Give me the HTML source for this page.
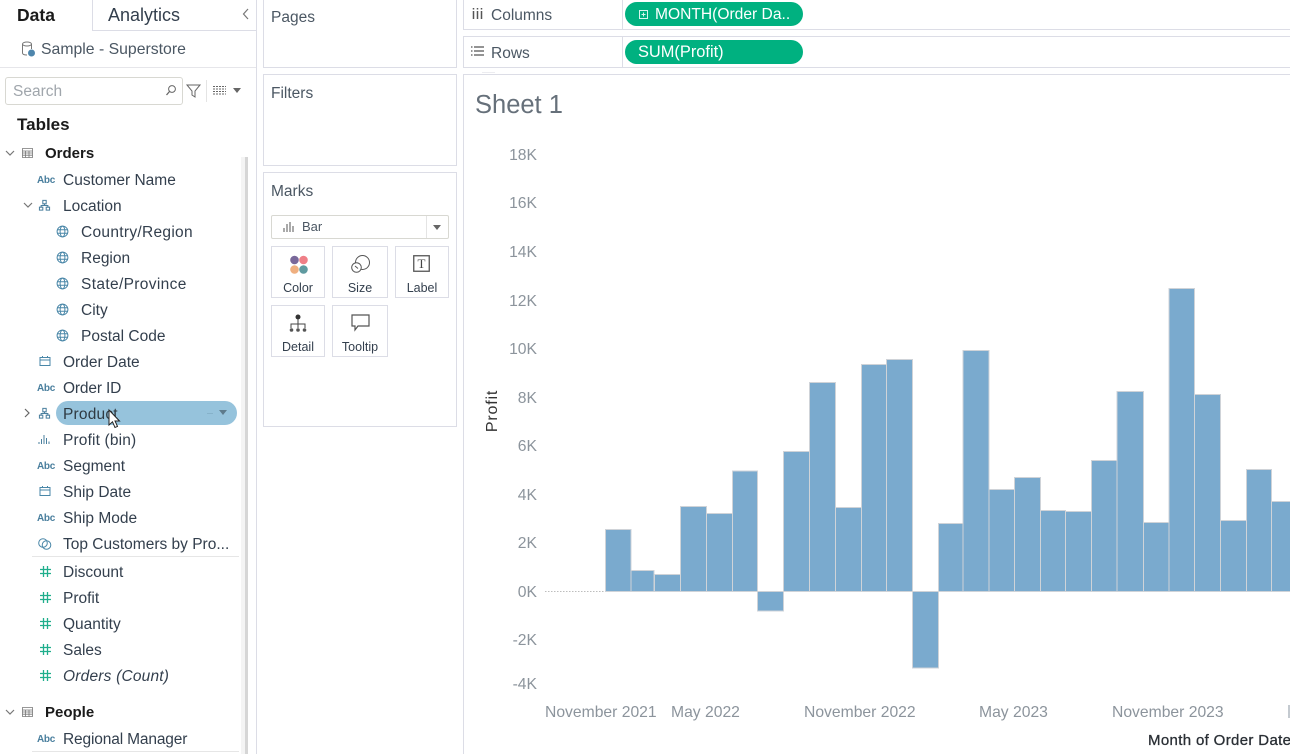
<!DOCTYPE html>
<html><head><meta charset="utf-8">
<style>
html,body{margin:0;padding:0;background:#fff;overflow:hidden;width:1290px;height:754px;}
#w{position:relative;width:1290px;height:754px;overflow:hidden;font-family:"Liberation Sans",sans-serif;color:#2b3a4a;}
.t{position:absolute;white-space:nowrap;font-size:15.5px;line-height:18px;margin-top:2px;color:#333f4d;}
.b{font-weight:bold;color:#1a1a1a;font-size:15px;}
.box{position:absolute;border:1px solid #dcdde6;box-sizing:border-box;background:#fff;}
.ax{position:absolute;width:60px;text-align:right;left:477px;font-size:15.7px;line-height:16px;margin-top:1px;color:#8c949c;white-space:nowrap;}
.xl{position:absolute;top:705px;font-size:15.7px;line-height:16px;color:#8c949c;white-space:nowrap;}
.pill{position:absolute;left:625px;width:178px;height:24px;border-radius:12px;background:#00b180;color:#fff;line-height:23px;white-space:nowrap;}
.pill span{top:1px;}
.card{position:absolute;border:1px solid #dcdde6;box-sizing:border-box;width:54px;height:52px;background:#fff;text-align:center;font-size:12.5px;color:#333f4d;}
.card span{position:absolute;left:0;right:0;top:34px;line-height:14px;}
.abc{position:absolute;left:37px;font-size:10px;line-height:12px;margin-top:2px;font-weight:bold;color:#4a7f9e;letter-spacing:-.3px;}
svg{position:absolute;overflow:visible;}
</style></head><body><div id="w">

<!-- Data pane -->
<div style="position:absolute;left:92px;top:0;width:1px;height:31px;background:#dcdde6"></div>
<div style="position:absolute;left:92px;top:30px;width:165px;height:1px;background:#dcdde6"></div>
<div style="position:absolute;left:0;top:67px;width:257px;height:1px;background:#e6e6ea"></div>
<div style="position:absolute;left:256px;top:0;width:1px;height:754px;background:#dcdde6"></div>
<div class="t b" style="left:17px;top:4px;font-size:17.5px">Data</div>
<div class="t" style="left:108px;top:4px;font-size:18px">Analytics</div>
<svg style="left:240px;top:7px" width="12" height="14"><path d="M8 2L3.500 7L8 12" fill="none" stroke="#777" stroke-width="1.200"/></svg>
<svg style="left:21px;top:41px" width="16" height="16"><ellipse cx="6" cy="3" rx="4.500" ry="2" fill="none" stroke="#777"/><path d="M1.500 3V12Q1.500 14 6 14M10.500 3V8" fill="none" stroke="#777"/><circle cx="10.500" cy="12" r="3.500" fill="#4f86ac"/></svg>
<div class="t" style="left:41px;top:39px;color:#4b5763;font-size:15.8px">Sample - Superstore</div>

<div style="position:absolute;left:5px;top:77px;width:178px;height:28px;border:1px solid #d8d8d2;border-radius:3px;box-sizing:border-box"></div>
<div class="t" style="left:13px;top:81px;color:#a0a6ac">Search</div>
<svg style="left:165px;top:84px" width="12" height="13"><circle cx="7" cy="5" r="3.400" fill="none" stroke="#666"/><path d="M4.500 7.500L1.500 11" stroke="#666" stroke-width="1.300"/></svg>
<svg style="left:186px;top:84px" width="15" height="14"><path d="M1 1H14L9 7V13L6 11V7Z" fill="none" stroke="#666"/></svg>
<div style="position:absolute;left:206px;top:80px;width:1px;height:22px;background:#e4e4e4"></div>
<svg style="left:213px;top:85px" width="13" height="11"><path d="M0 1.500H13M0 4H13M0 6.500H13M0 9H13" stroke="#666" stroke-dasharray="2 1"/></svg>
<svg style="left:233px;top:88px" width="9" height="6"><path d="M0 0H8L4 5Z" fill="#666"/></svg>
<div class="t b" style="left:17px;top:114px;font-size:17px">Tables</div>

<!-- Orders -->
<svg style="left:5px;top:150px" width="10" height="7"><path d="M1 1L5 5L9 1" fill="none" stroke="#777" stroke-width="1.200"/></svg>
<svg style="left:22px;top:148px" width="11" height="10"><path d="M.5.500H10.500V9.500H.5ZM.5 3H10.500M.5 5H10.500M.5 7.200H10.500M3.500 3V9.500M7 3V9.500" fill="none" stroke="#777" stroke-width=".8"/></svg>
<div class="t b" style="left:45px;top:143px">Orders</div>
<div style="position:absolute;left:245px;top:157px;width:3px;height:597px;background:#d6d6d6"></div>
<div style="position:absolute;left:241px;top:157px;width:4px;height:597px;background:#f4f4f4"></div>

<div class="abc" style="top:173px">Abc</div>
<div class="t" style="left:63px;top:170px">Customer Name</div>

<svg style="left:23px;top:202px" width="10" height="7"><path d="M1 1L5 5L9 1" fill="none" stroke="#777" stroke-width="1.200"/></svg>
<svg style="left:39px;top:200px" width="11" height="11" viewBox="0 0 13 13"><path d="M4.500.5H8.500V4.500H4.500ZM.5 8.500H4.500V12H.5ZM8.500 8.500H12.500V12H8.500ZM6.500 4.500V6.500M2.500 8.500V6.500H10.500V8.500" fill="none" stroke="#4a7f9e" stroke-width="1.200"/></svg>
<div class="t" style="left:63px;top:196px">Location</div>

<svg style="left:56px;top:225px" width="13" height="13"><g fill="none" stroke="#4a87a8" stroke-width="1"><circle cx="6.500" cy="6.500" r="5.400"/><ellipse cx="6.500" cy="6.500" rx="2.400" ry="5.400"/><path d="M1.500 4.800H11.500M1.500 8.200H11.500"/></g></svg>
<div class="t" style="left:81px;top:222px;letter-spacing:.3px">Country/Region</div>
<svg style="left:56px;top:251px" width="13" height="13"><g fill="none" stroke="#4a87a8" stroke-width="1"><circle cx="6.500" cy="6.500" r="5.400"/><ellipse cx="6.500" cy="6.500" rx="2.400" ry="5.400"/><path d="M1.500 4.800H11.500M1.500 8.200H11.500"/></g></svg>
<div class="t" style="left:81px;top:248px">Region</div>
<svg style="left:56px;top:277px" width="13" height="13"><g fill="none" stroke="#4a87a8" stroke-width="1"><circle cx="6.500" cy="6.500" r="5.400"/><ellipse cx="6.500" cy="6.500" rx="2.400" ry="5.400"/><path d="M1.500 4.800H11.500M1.500 8.200H11.500"/></g></svg>
<div class="t" style="left:81px;top:274px;letter-spacing:.35px">State/Province</div>
<svg style="left:56px;top:303px" width="13" height="13"><g fill="none" stroke="#4a87a8" stroke-width="1"><circle cx="6.500" cy="6.500" r="5.400"/><ellipse cx="6.500" cy="6.500" rx="2.400" ry="5.400"/><path d="M1.500 4.800H11.500M1.500 8.200H11.500"/></g></svg>
<div class="t" style="left:81px;top:300px">City</div>
<svg style="left:56px;top:329px" width="13" height="13"><g fill="none" stroke="#4a87a8" stroke-width="1"><circle cx="6.500" cy="6.500" r="5.400"/><ellipse cx="6.500" cy="6.500" rx="2.400" ry="5.400"/><path d="M1.500 4.800H11.500M1.500 8.200H11.500"/></g></svg>
<div class="t" style="left:81px;top:326px">Postal Code</div>

<svg style="left:39px;top:355px" width="12" height="12"><path d="M1 2.500H11V10.500H1ZM1 5H11M3.500 1V2.500M8.500 1V2.500" fill="none" stroke="#4a87a8"/></svg>
<div class="t" style="left:63px;top:352px">Order Date</div>
<div class="abc" style="top:381px">Abc</div>
<div class="t" style="left:63px;top:378px;letter-spacing:-.15px">Order ID</div>

<div style="position:absolute;left:56px;top:401px;width:181px;height:24px;border-radius:12px;background:#96c3dc"></div>
<svg style="left:24px;top:408px" width="7" height="10"><path d="M1 1L5 5L1 9" fill="none" stroke="#666" stroke-width="1.200"/></svg>
<svg style="left:39px;top:408px" width="11" height="11" viewBox="0 0 13 13"><path d="M4.500.5H8.500V4.500H4.500ZM.5 8.500H4.500V12H.5ZM8.500 8.500H12.500V12H8.500ZM6.500 4.500V6.500M2.500 8.500V6.500H10.500V8.500" fill="none" stroke="#4a7f9e" stroke-width="1.200"/></svg>
<div class="t" style="left:63px;top:404px;color:#2f3a42;letter-spacing:.2px">Product</div>
<div style="position:absolute;left:207px;top:413px;width:6px;height:1px;background:#86b2ca"></div>
<svg style="left:219px;top:410px" width="9" height="6"><path d="M0 0H8L4 5Z" fill="#5e7b8c"/></svg>
<svg style="left:108px;top:409px" width="13" height="21"><path d="M1 1V16L4.500 12.800L7 18.500L9.500 17.400L7 12H11.500Z" fill="#fff" stroke="#222" stroke-width="1"/></svg>

<svg style="left:38px;top:434px" width="13" height="11"><path d="M1 10V8M3.500 10V5M6 10V1M8.500 10V4M11 10V7.500" stroke="#4a7f9e" stroke-width="1" fill="none"/></svg>
<div class="t" style="left:63px;top:430px;letter-spacing:.15px">Profit (bin)</div>
<div class="abc" style="top:459px">Abc</div>
<div class="t" style="left:63px;top:456px">Segment</div>
<svg style="left:39px;top:485px" width="12" height="12"><path d="M1 2.500H11V10.500H1ZM1 5H11M3.500 1V2.500M8.500 1V2.500" fill="none" stroke="#4a87a8"/></svg>
<div class="t" style="left:63px;top:482px">Ship Date</div>
<div class="abc" style="top:511px">Abc</div>
<div class="t" style="left:63px;top:508px">Ship Mode</div>
<svg style="left:38px;top:537px" width="14" height="14"><circle cx="5" cy="6" r="4.300" fill="none" stroke="#4a87a8"/><circle cx="8.500" cy="8" r="4.300" fill="none" stroke="#4a87a8"/></svg>
<div class="t" style="left:63px;top:534px">Top Customers by Pro...</div>
<div style="position:absolute;left:32px;top:556px;width:207px;height:1px;background:#e6e6e6"></div>

<svg style="left:40px;top:566px" width="11" height="11"><path d="M3.500 0V11M7.500 0V11M0 3.500H11M0 7.500H11" stroke="#1fae8c" stroke-width="1.300" fill="none"/></svg>
<div class="t" style="left:63px;top:562px">Discount</div>
<svg style="left:40px;top:592px" width="11" height="11"><path d="M3.500 0V11M7.500 0V11M0 3.500H11M0 7.500H11" stroke="#1fae8c" stroke-width="1.300" fill="none"/></svg>
<div class="t" style="left:63px;top:588px">Profit</div>
<svg style="left:40px;top:618px" width="11" height="11"><path d="M3.500 0V11M7.500 0V11M0 3.500H11M0 7.500H11" stroke="#1fae8c" stroke-width="1.300" fill="none"/></svg>
<div class="t" style="left:63px;top:614px">Quantity</div>
<svg style="left:40px;top:644px" width="11" height="11"><path d="M3.500 0V11M7.500 0V11M0 3.500H11M0 7.500H11" stroke="#1fae8c" stroke-width="1.300" fill="none"/></svg>
<div class="t" style="left:63px;top:640px">Sales</div>
<svg style="left:40px;top:670px" width="11" height="11"><path d="M3.500 0V11M7.500 0V11M0 3.500H11M0 7.500H11" stroke="#1fae8c" stroke-width="1.300" fill="none"/></svg>
<div class="t" style="left:63px;top:666px;font-style:italic;letter-spacing:.2px">Orders (Count)</div>

<svg style="left:5px;top:709px" width="10" height="7"><path d="M1 1L5 5L9 1" fill="none" stroke="#777" stroke-width="1.200"/></svg>
<svg style="left:22px;top:707px" width="11" height="10"><path d="M.5.500H10.500V9.500H.5ZM.5 3H10.500M.5 5H10.500M.5 7.200H10.500M3.500 3V9.500M7 3V9.500" fill="none" stroke="#777" stroke-width=".8"/></svg>
<div class="t b" style="left:45px;top:702px">People</div>
<div class="abc" style="top:732px">Abc</div>
<div class="t" style="left:63px;top:729px;letter-spacing:-.15px">Regional Manager</div>
<div style="position:absolute;left:32px;top:751px;width:207px;height:1px;background:#e6e6e6"></div>

<!-- Middle cards -->
<div class="box" style="left:263px;top:-1px;width:194px;height:69px"></div>
<div class="t" style="left:271px;top:7px;color:#4b5763">Pages</div>
<div class="box" style="left:263px;top:74px;width:194px;height:92px"></div>
<div class="t" style="left:271px;top:83px;color:#4b5763">Filters</div>
<div class="box" style="left:263px;top:172px;width:194px;height:255px"></div>
<div class="t" style="left:271px;top:181px;color:#4b5763">Marks</div>

<div style="position:absolute;left:271px;top:215px;width:178px;height:24px;border:1px solid #d8d8d2;border-radius:2px;box-sizing:border-box"></div>
<div style="position:absolute;left:426px;top:216px;width:1px;height:22px;background:#e4e4e4"></div>
<svg style="left:283px;top:221px" width="12" height="12"><path d="M1 11V7M4 11V3M7 11V1M10 11V5" stroke="#555" fill="none"/></svg>
<div class="t" style="left:302px;top:217px;font-size:13px;line-height:16px;color:#4b5763">Bar</div>
<svg style="left:433px;top:225px" width="9" height="6"><path d="M0 0H8L4 5Z" fill="#666"/></svg>

<div class="card" style="left:271px;top:246px"><svg style="left:17px;top:8px" width="20" height="20"><circle cx="5.500" cy="5" r="4.300" fill="#79689a"/><circle cx="14.500" cy="5" r="4.300" fill="#ef7f87"/><circle cx="5.500" cy="14.500" r="4.300" fill="#efaf80"/><circle cx="14.500" cy="14.500" r="4.300" fill="#5f9aa0"/></svg><span>Color</span></div>
<div class="card" style="left:332px;top:246px;width:56px"><svg style="left:18px;top:8px" width="20" height="19"><circle cx="11.500" cy="7.500" r="7" fill="none" stroke="#555"/><circle cx="5.500" cy="12.500" r="4.800" fill="#fff" stroke="#555"/><path d="M4 11L7 13.500" stroke="#555"/></svg><span>Size</span></div>
<div class="card" style="left:395px;top:246px"><svg style="left:17px;top:8px" width="18" height="18"><rect x=".75" y=".75" width="15.500" height="15.500" fill="none" stroke="#555" stroke-width="1.300"/><text x="8.500" y="13" text-anchor="middle" font-family="Liberation Serif" font-size="13" fill="#444">T</text></svg><span>Label</span></div>
<div class="card" style="left:271px;top:305px"><svg style="left:17px;top:8px" width="18" height="20"><circle cx="9" cy="3" r="2.500" fill="#333"/><path d="M9 5V10M2 14V10H16V14M9 10V14" stroke="#444" fill="none"/><circle cx="2.500" cy="16" r="1.800" fill="#555"/><circle cx="9" cy="16" r="1.800" fill="#555"/><circle cx="15.500" cy="16" r="1.800" fill="#555"/></svg><span>Detail</span></div>
<div class="card" style="left:332px;top:305px;width:56px"><svg style="left:18px;top:8px" width="20" height="18"><path d="M1 1H18V12H7L4 16V12H1Z" fill="none" stroke="#555" stroke-width="1.200"/></svg><span>Tooltip</span></div>

<!-- Shelves -->
<div class="box" style="left:463px;top:-1px;width:840px;height:31px"></div>
<div class="box" style="left:463px;top:36px;width:840px;height:32px"></div>
<div style="position:absolute;left:622px;top:0;width:1px;height:30px;background:#dcdde6"></div>
<div style="position:absolute;left:622px;top:37px;width:1px;height:30px;background:#dcdde6"></div>
<svg style="left:472px;top:8px" width="12" height="11"><path d="M1.500 3V11M5.500 3V11M9.500 3V11" stroke="#555" stroke-width="1.500"/><path d="M1.500 0V1.500M5.500 0V1.500M9.500 0V1.500" stroke="#555" stroke-width="1.500"/></svg>
<div class="t" style="left:491px;top:5px;color:#4b5763">Columns</div>
<svg style="left:471px;top:46px" width="13" height="10"><path d="M3 1H13M3 5H13M3 9H13M0 1H1.500M0 5H1.500M0 9H1.500" stroke="#555" stroke-width="1.200"/></svg>
<div class="t" style="left:491px;top:43px;color:#4b5763">Rows</div>
<div class="pill" style="top:2px"><svg style="left:14px;top:8px" width="9" height="9"><path d="M.5.500H8.500V8.500H.5ZM2.500 4.500H6.500M4.500 2.500V6.500" fill="none" stroke="#d8f5ec"/></svg><span style="position:absolute;left:30px;font-size:15.6px">MONTH(Order Da..</span></div>
<div class="pill" style="top:40px"><span style="position:absolute;left:13px;font-size:16.4px">SUM(Profit)</span></div>

<!-- Viz -->
<div class="box" style="left:463px;top:74px;width:840px;height:700px"></div>
<div style="position:absolute;left:482px;top:72px;width:13px;height:1px;background:#ececf0"></div>
<div style="position:absolute;left:475px;top:90px;font-size:25.5px;line-height:30px;color:#66707a;white-space:nowrap">Sheet 1</div>

<div class="ax" style="top:147px">18K</div>
<div class="ax" style="top:195px">16K</div>
<div class="ax" style="top:244px">14K</div>
<div class="ax" style="top:293px">12K</div>
<div class="ax" style="top:341px">10K</div>
<div class="ax" style="top:390px">8K</div>
<div class="ax" style="top:438px">6K</div>
<div class="ax" style="top:487px">4K</div>
<div class="ax" style="top:535px">2K</div>
<div class="ax" style="top:584px">0K</div>
<div class="ax" style="top:632px">-2K</div>
<div class="ax" style="top:676px">-4K</div>
<div style="position:absolute;left:463px;top:403px;width:60px;text-align:center;transform:rotate(-90deg);font-size:16px;line-height:16px;color:#333;letter-spacing:.8px">Profit</div>

<svg style="left:0;top:0" width="1290" height="754">
<path d="M545 591.500H605" stroke="#bdbdbd" stroke-dasharray="1.500 1.500" fill="none"/>
<g fill="#7aaace" stroke="#cfd3d8" stroke-width="1">
<rect x="605.500" y="529.500" width="25.500" height="62"/>
<rect x="631" y="570.500" width="23" height="21"/>
<rect x="654.500" y="574.500" width="26" height="17"/>
<rect x="680.500" y="506.500" width="26" height="85"/>
<rect x="706.500" y="513.500" width="26" height="78"/>
<rect x="732.500" y="471" width="25" height="120.500"/>
<rect x="757.500" y="591.500" width="26" height="19.500"/>
<rect x="783.500" y="451.500" width="26" height="140"/>
<rect x="809.500" y="382.500" width="26" height="209"/>
<rect x="835.500" y="507.500" width="26" height="84"/>
<rect x="861.500" y="364.500" width="25" height="227"/>
<rect x="886.500" y="359.500" width="26" height="232"/>
<rect x="912.500" y="591.500" width="26" height="76.500"/>
<rect x="938.500" y="523.500" width="24.500" height="68"/>
<rect x="963" y="350.500" width="26" height="241"/>
<rect x="989" y="489.500" width="25.500" height="102"/>
<rect x="1014.500" y="477.500" width="26" height="114"/>
<rect x="1040.500" y="510.500" width="25" height="81"/>
<rect x="1065.500" y="511.500" width="26" height="80"/>
<rect x="1091.500" y="460.500" width="25.500" height="131"/>
<rect x="1117" y="391.500" width="26.500" height="200"/>
<rect x="1143.500" y="522.500" width="25.500" height="69"/>
<rect x="1169" y="288.500" width="25.500" height="303"/>
<rect x="1194.500" y="394.500" width="26" height="197"/>
<rect x="1220.500" y="520.500" width="26" height="71"/>
<rect x="1246.500" y="469.500" width="25" height="122"/>
<rect x="1271.500" y="501.500" width="26" height="90"/>
</g>
</svg>

<div class="xl" style="left:545px">November 2021</div>
<div class="xl" style="left:671px">May 2022</div>
<div class="xl" style="left:804px">November 2022</div>
<div class="xl" style="left:979px">May 2023</div>
<div class="xl" style="left:1112px">November 2023</div>
<div class="t" style="left:1148px;top:730px;font-size:15px;line-height:18px;color:#2a2f35;-webkit-text-stroke:.3px #2a2f35;letter-spacing:.35px">Month of Order Date</div>
<div style="position:absolute;left:1288px;top:705px;width:2px;height:13px;background:#c4cad0"></div>

</div></body></html>
